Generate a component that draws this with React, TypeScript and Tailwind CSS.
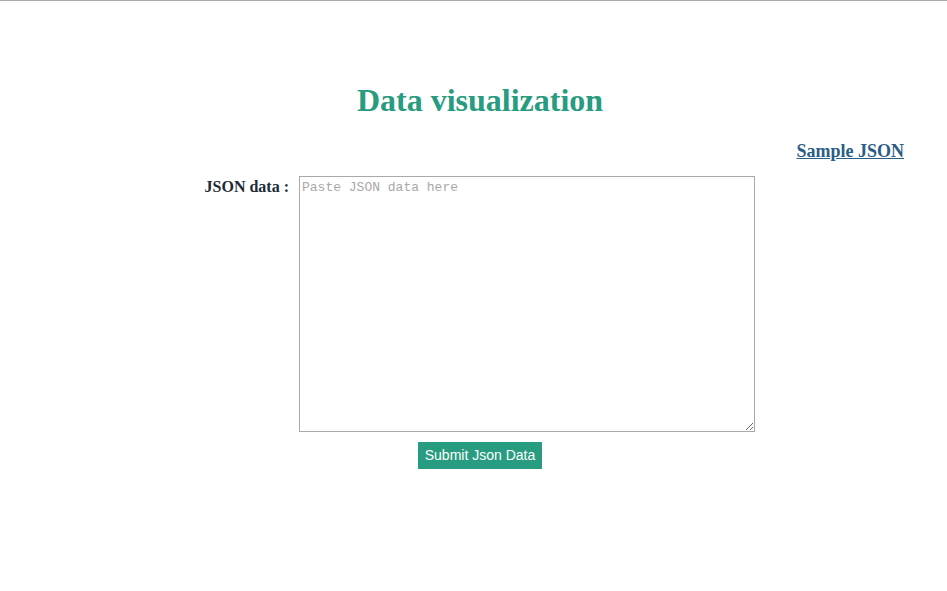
export default function App() {
  return (
    <div className="min-h-screen bg-white overflow-hidden border-t border-[#a9a9a9]">
      <div className="w-[960px] font-['Liberation_Serif',serif]">
        <h1 className="mt-[80px] text-center text-[32px] leading-[38px] font-bold text-[#279c80]">
          Data visualization
        </h1>

        <div className="mt-[21px] flex justify-end pr-[56px]">
          <a href="#" className="text-[18px] leading-[22px] font-bold text-[#2b5d86] underline">
            Sample JSON
          </a>
        </div>

        <div className="mt-[14px] flex items-start">
          <label className="w-[290px] pr-[1px] pt-[2px] text-right text-[16px] leading-[18px] font-bold text-[#1c2b36]">
            JSON data :
          </label>
          <textarea
            placeholder="Paste JSON data here"
            className="ml-[9px] w-[456px] h-[256px] border border-[#a9a9a9] px-[2px] pt-[2px] pb-[1px] font-['Liberation_Mono',monospace] text-[13px] leading-[18px] text-[#333] placeholder:text-[#a8a8a8] outline-none resize"
          />
        </div>

        <div className="mt-[10px] flex justify-center">
          <button className="h-[27px] w-[124px] bg-[#279c80] font-['Liberation_Sans',sans-serif] text-[14px] text-white">
            Submit Json Data
          </button>
        </div>
      </div>
    </div>
  );
}
